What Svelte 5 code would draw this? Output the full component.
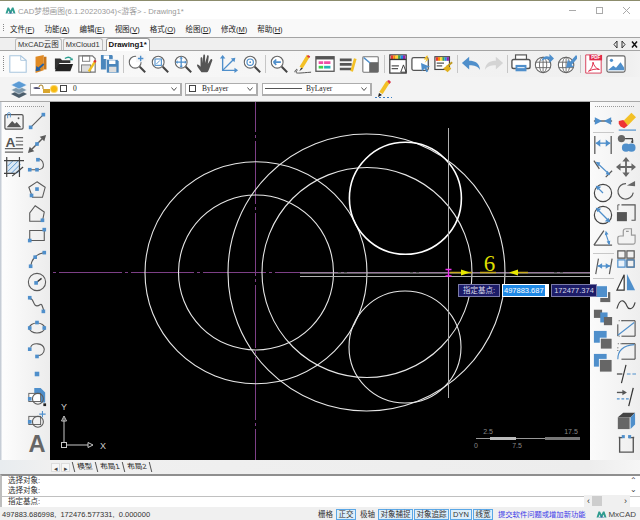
<script>
  const B = '#4f8fcb', G = '#5a5a5a', D = '#333';
  const n = (x, y, r = 2) => `<rect x="${x - r}" y="${y - r}" width="${r * 2}" height="${r * 2}" fill="${B}"/>`;
  const s = (d, c = G, w = 1.2) => `<path d="${d}" fill="none" stroke="${c}" stroke-width="${w}"/>`;
  const f = (d, c = G) => `<path d="${d}" fill="${c}"/>`;
  const mag = (x = '') => `<circle cx="9" cy="9" r="6.5" fill="#fff" stroke="#666" stroke-width="1.2"/><path d="M14 14l6 6" stroke="#444" stroke-width="2.2"/>${x}`;
  const globe = (x) => `<circle cx="10" cy="12" r="8.5" fill="#fff" stroke="#666" stroke-width="1.2"/><ellipse cx="10" cy="12" rx="4" ry="8.5" fill="none" stroke="#666"/><path d="M2 9h16M2 15h16M10 3.500v17" stroke="#666"/>${x}`;
  const stripes = ['#e53935', '#fb8c00', '#fdd835', '#43a047', '#1e88e5', '#8e24aa'];
  const rainbow = (x, y, w) => stripes.map((c, i) => `<rect x="${x + i * w}" y="${y}" width="${w}" height="4" fill="${c}"/>`).join('');

  const top = [
    [`<path d="M2 2h12l6 5v13H2z" fill="#fff" stroke="#a9c6de" stroke-width="1.2"/><path d="M14 2v5h6" fill="none" stroke="#a9c6de"/>`, `<path d="M5 3l9-2v17l-9 3z" fill="#e08a24"/><path d="M14 3h3v14h-3z" fill="#c7761c"/><path d="M14 11l-7 6" stroke="#1f5fa8" stroke-width="2"/><path d="M5 19l1-6 5 5z" fill="#1f5fa8"/>`, `<path d="M1 5h6l2 2h9v3H6l-3 7H1z" fill="#333"/><path d="M5 11h16l-3 8H1z" fill="#222"/><path d="M12 5q4-3 7 0" fill="none" stroke="#2a9d8f" stroke-width="1.5"/><path d="M21 7l-4 0 3-3z" fill="#2a9d8f"/>`, `<path d="M2 2h15l3 3v15H2z" fill="#fff" stroke="#777" stroke-width="1.3"/><rect x="6" y="2" width="8" height="6" fill="none" stroke="#777"/><rect x="5" y="12" width="10" height="8" fill="#ddd" stroke="#777"/><path d="M20 8l-7 11" stroke="#f0c020" stroke-width="2.6"/><path d="M20.500 7l-1.500 2" stroke="#d33" stroke-width="2.6"/>`, `<path d="M1 1h12l1 1v15H1z" fill="#4a86bc"/><rect x="4" y="1.500" width="6" height="4" fill="#fff"/><path d="M7 6h12l2 2v13H7z" fill="#4a86bc" stroke="#fff" stroke-width=".8"/><rect x="10" y="7" width="7" height="4" fill="#fff"/><rect x="10" y="14" width="8" height="6" fill="#ddd"/>`],
    [mag(`<rect x="10" y="0" width="11" height="9" fill="#f5f5f5"/><path d="M15 2v6M12 5h6" stroke="${B}" stroke-width="1.5"/>`), mag(`<rect x="5.500" y="5.500" width="7" height="7" fill="none" stroke="${B}" stroke-width="1.200"/><path d="M7 11l4-4" stroke="${B}"/>`), mag(`<path d="M9 4v10M4 9h10" stroke="${B}" stroke-width="1.400"/><path d="M9 3l-2 2h4zM9 15l-2-2h4zM3 9l2-2v4zM15 9l-2-2v4z" fill="${B}"/>`), f('M6 20c-2-3-5-6-5-8 1-1 2 0 4 2l0-9c0-2 2-2 2 0v5l1-8c0-2 2-2 2 0v8l2-7c0-2 2-2 2 0l-1 8 3-5c1-1 2 0 2 1l-3 8c-1 3-2 5-3 5z', '#555'), `${s('M4 3v15h15', B, 1.5)}${s('M4 18L16 6', B, 1.5)}${f(`M4 1l3 4H1zM21 18l-4-3v6zM18 4l-1 5-4-4z`, B)}`, mag(`<circle cx="9" cy="9" r="3.500" fill="none" stroke="${B}" stroke-width="1.300"/><circle cx="9" cy="9" r="1" fill="${B}"/>`)],
    [mag(`<path d="M5 9h8M5 9l3-3M5 9l3 3" stroke="${B}" stroke-width="1.800" fill="none"/>`), `<path d="M18 2l-8 13" stroke="#f3c026" stroke-width="4"/><path d="M17.500 1l2.500 1.500-1 2-2.500-1.500z" fill="#d9344a"/><path d="M8 19l2-4 2 1z" fill="#333"/><path d="M3 20c1-4 4-4 2-1s2 2 16 1" fill="none" stroke="#444"/>`, `<rect x="1" y="3" width="20" height="16" fill="#fff" stroke="#555" stroke-width="1.400"/><rect x="1" y="3" width="20" height="3" fill="#555"/><rect x="4" y="8" width="5" height="3" fill="#ef4fa6"/><rect x="10" y="8" width="7" height="3" fill="#ef4fa6"/><rect x="4" y="13" width="5" height="3" fill="#3ed14a"/><rect x="10" y="13" width="7" height="3" fill="#26b4b4"/>`, `<path d="M2 5h13v3H2zM2 10h13v3H2zM2 15h13v3H2z" fill="#555"/><path d="M15 19L19 5" stroke="#f3c026" stroke-width="3"/>`, `<rect x="2" y="3" width="17" height="17" rx="1" fill="#fff" stroke="#777" stroke-width="1.200"/><path d="M9 9h10v11H9z" fill="#666"/><path d="M3 4l7 6" stroke="${B}" stroke-width="1.500"/>`],
    [`<rect x="2" y="1" width="18" height="20" fill="#fff" stroke="#333" stroke-width="1.300"/>${rainbow(3, 1.500, 2.700)}<path d="M2 6h18" stroke="#333" stroke-width="1.500"/><path d="M4 13h8M4 16h7" stroke="#555" stroke-width="1.400"/><path d="M14 20l3-8 3 8z" fill="none" stroke="#333"/>`, `<rect x="1" y="4" width="18" height="14" rx="2" fill="#fff" stroke="#555" stroke-width="1.400"/><path d="M11 10l10 4-4 1 2 4-2 1-2-4-3 3z" fill="${B}"/><path d="M17 2l-3 4h3l-2 4 5-5h-3l2-3z" fill="#f3c026"/>`, `<rect x="1" y="3" width="16" height="14" fill="#fff" stroke="#444" stroke-width="1.300"/>${rainbow(2, 3.500, 2.400)}<path d="M3 10h8M3 13h6" stroke="#555" stroke-width="1.300"/><path d="M20 9l-6 5" stroke="#c09a20" stroke-width="2"/><path d="M15 12l4 4-4 4-5-4z" fill="#e0b020"/>`],
    [`<path d="M1 10l8-7v4.500c6 0 11 2 12 10-3-4-6-5-12-5V17z" fill="${B}"/>`, `<path d="M21 10l-8-7v4.500c-6 0-11 2-12 10 3-4 6-5 12-5V17z" fill="#d4d4d4"/>`],
    [`<rect x="5" y="1" width="12" height="6" fill="#fff" stroke="#555" stroke-width="1.300"/><rect x="1" y="6" width="20" height="10" rx="2" fill="#fff" stroke="#555" stroke-width="1.500"/><rect x="5" y="12" width="12" height="7" fill="${B}"/><path d="M7 15h8" stroke="#fff"/>`, globe(`<path d="M8 8c2-6 6-6 9-5V0l5 5-5 5V6c-3-1-6-1-9 2z" fill="${B}"/>`), globe(`<path d="M21 1l-7 8-2-3-2 9 9-1-3-2 7-8z" fill="${B}"/>`)],
    [`<path d="M3 1h12l5 3v17H3z" fill="#fff" stroke="#d9465f" stroke-width="1.100"/><rect x="7" y="1" width="14" height="6" fill="#e02a48"/><text x="14" y="6" text-anchor="middle" font-size="5" font-weight="700" fill="#fff" font-family="Liberation Sans, sans-serif">PDF</text><path d="M6 19c3-2 5-6 5-10 1 4 3 7 7 8-4-1-8 0-12 2z" fill="none" stroke="#e02a48" stroke-width="1.100"/>`, `<rect x="1" y="2" width="20" height="18" rx="2" fill="#fff" stroke="#666" stroke-width="1.300"/><path d="M2 18l6-5 3 2 5-6 4 6v3z" fill="${B}"/><circle cx="6" cy="7" r="1.800" fill="${B}"/>`]
  ];

  const leftA = [
    `<rect x="1" y="4" width="20" height="16" rx="1.500" fill="#f4f4f4" stroke="#555" stroke-width="1.300"/><path d="M3 18l6-7 3 3 2-2 5 6z" fill="#555"/><circle cx="16" cy="8" r="1" fill="#555"/><path d="M4 8V2.500q1.500-1.500 3 0V7" fill="none" stroke="${B}"/>`,
    `<text x="7" y="14" text-anchor="middle" font-size="15" font-weight="700" fill="#555" font-family="Liberation Sans, sans-serif">A</text><path d="M13 4h8M13 8h8M13 12h8M1 16h20M1 20h20" stroke="#666" stroke-width="1.300"/>`,
    `<path d="M4 4h14v14H4z" fill="#dbe8f4"/><path d="M4 10l6-6M4 16L16 4M8 18L18 8M14 18l4-4" stroke="${B}"/><path d="M3 0v22M17 0v22M0 4h22M0 18h12" stroke="#444" stroke-width="1.300"/><path d="M9 21L21 11" stroke="#444" stroke-width="1.300"/>`
  ];
  const leftB = [
    s('M4 18L18 4') + n(4, 18) + n(18, 4),
    s('M3 19L19 3', G, 1.500) + f('M1 21l2-7 5 5zM21 1l-2 7-5-5z') + n(11, 11),
    s('M3 14h8q8 0 7-6t-7-6') + n(3, 14) + n(11, 14) + n(12, 3),
    s('M11 2l9 6-3 11H6L2 8z') + n(11, 10) + n(5, 17),
    s('M9 3l10 7-2 10H3V11z') + n(17, 19),
    s('M3 5h16v11H3z') + n(3, 16) + n(19, 4),
    s('M4 19Q6 6 19 4') + n(4, 19) + n(9, 9) + n(19, 4),
    `<circle cx="11" cy="11" r="9.500" fill="none" stroke="${G}" stroke-width="1.200"/>` + s('M11 11L16 7', D, 1.500) + n(10, 12),
    s('M3 4c5-1 3 8 8 8s4-7 8 7') + n(3, 3) + n(18, 18),
    `<ellipse cx="11" cy="11" rx="8.500" ry="5.500" fill="none" stroke="${G}" stroke-width="1.200"/>` + n(3, 11) + n(19, 11) + n(11, 5),
    s('M4 7C6 1 18 2 19 9c0 5-4 7-7 7') + n(3, 9) + n(11, 17),
    n(11, 11, 2.500),
    `<path d="M8 1h7l5 5v11h-5V9H8z" fill="${B}"/><rect x="2" y="7" width="13" height="9" fill="#fff" stroke="${G}"/><circle cx="12" cy="13" r="6" fill="none" stroke="${G}" stroke-width="1.200"/>` + n(3, 13) + `<rect x="18" y="18" width="3" height="3" fill="#222"/>`,
    `<rect x="2" y="7" width="13" height="9" fill="none" stroke="${G}"/><circle cx="12" cy="13" r="6" fill="none" stroke="${G}" stroke-width="1.200"/>` + n(3, 13) + `<path d="M17 1v7M13.500 4.500h7" stroke="${B}" stroke-width="1.200"/>`,
    `<text x="11" y="20.500" text-anchor="middle" font-size="26" font-weight="700" fill="#666" font-family="Liberation Sans, sans-serif">A</text>`
  ];
  const rightA = [
    { h: 23, i: s('M1 11h20', D) + f(`M10 11L2 7v8zM12 11l8-4v8z`, B) },
    { h: 2, sep: 1 },
    { h: 21, i: s('M2 1v20M20 1v20', G, 1.400) + s('M3 9h16', B, 1.500) + f(`M3 9l5-4v8zM19 9l-5-4v8z`, B) },
    { h: 26, i: s('M1 3l6 9M14 21l7-7', G, 1.400) + s('M4 5l14 13', B, 1.400) + f(`M3 4l5 1-2 4zM19 19l-5-1 2-4z`, B) },
    { h: 23, i: `<circle cx="11" cy="11" r="9.500" fill="none" stroke="#444" stroke-width="1.300"/>` + s('M4 4l7 7', B, 1.400) + f(`M3 3l6 1-4 4z`, B) },
    { h: 22, i: `<circle cx="11" cy="11" r="9.500" fill="none" stroke="#444" stroke-width="1.300"/>` + s('M5 5l12 12', B, 1.400) + f(`M3 3l6 1-4 4zM19 19l-6-1 4-4z`, B) },
    { h: 22, i: s('M1 20h20M1 20L12 4', G, 1.400) + s('M14 7l4 12', B) + f(`M14 4l3 4-4 1zM18 20l1-5-4 1z`, B) },
    { h: 7, sep: 1 },
    { h: 21, i: s('M3 20L6 3M18 20l3-17', G, 1.300) + s('M5 11h14', B, 1.500) + f(`M5 11l5-3v6zM19 11l-5-3v6z`, B) },
    { h: 4, sep: 1 },
    { h: 26, i: `<rect x="8" y="10" width="11" height="11" fill="#666"/><rect x="3" y="3" width="13" height="13" fill="${B}" stroke="#fff"/>` },
    { h: 22, i: `<rect x="1" y="3" width="9" height="9" fill="#666"/><rect x="8" y="6" width="8" height="11" fill="${B}"/><rect x="12" y="11" width="9" height="9" fill="#666"/>` },
    { h: 23, i: `<rect x="1" y="1" width="14" height="13" fill="${B}"/><rect x="8" y="9" width="13" height="12" fill="#666" stroke="#fff"/>` },
    { h: 23, i: `<rect x="1" y="1" width="14" height="14" fill="${B}"/><rect x="7" y="7" width="14" height="14" fill="#666" stroke="#fff"/>` }
  ];
  const rightB = [
    `<path d="M8 11L17 2l5 5-9 9z" fill="#f3c026"/><path d="M3 11l5-1 5 6-4 3-4-2-2-3z" fill="#e33"/><path d="M3 21h19" stroke="${B}" stroke-width="1.300"/>`,
    `<circle cx="6" cy="5" r="4" fill="#666"/><path d="M10 5h8v5" fill="none" stroke="#444" stroke-width="1.300"/><path d="M16 9l3-3v4z" fill="#444"/><circle cx="11" cy="15" r="4.500" fill="${B}"/><circle cx="17" cy="15" r="4.500" fill="${B}"/>`,
    s('M11 3v16M3 11h16', '#666', 2) + f('M11 0l4 5H7zM11 22l4-5H7zM0 11l5-4v8zM22 11l-5-4v8z', '#666'),
    s('M19 14a8.500 8.500 0 1 1-8-10', G, 1.300) + f('M12 6l9-5v6z', '#666'),
    `<path d="M6 2h15v17h-4" fill="none" stroke="#555" stroke-width="1.300"/><path d="M2 2h2M2 2v6" stroke="#555"/><rect x="1" y="10" width="11" height="10" fill="#555"/>`,
    `<path d="M5 11h3V6q0-3 3-3h6v7h4v8q0 2-2 2H4q-2 0-2-2v-5q0-2 3-2zM11 6h3" fill="#f2f2f2" stroke="#999" stroke-width="1.300"/>`,
    `<path d="M2 2h8v8H2zM12 2h8v8h-8zM12 12h8v8h-8z" fill="none" stroke="#555" stroke-width="1.300"/><path d="M2 12h8v8H2z" fill="#eaf2fa" stroke="${B}" stroke-width="1.300"/><path d="M12 12h8v8h-8z" fill="none" stroke="${B}" stroke-width="1.100"/>`,
    `<path d="M1 20L9 3v17z" fill="#fff" stroke="#333" stroke-width="1.300"/><path d="M12 2l9 18h-9z" fill="${B}"/>`,
    s('M1 15C5 1 10 7 12 12s7 4 9-4', '#444', 1.300),
    `<path d="M2 20V7M6 3h15v17H6" fill="none" stroke="#444" stroke-width="1.100"/><path d="M3 3h4M3 20h3" stroke="#444" stroke-dasharray="1 2"/><path d="M2 19L20 5" stroke="${B}" stroke-width="1.200"/>`,
    `<path d="M6 3h15v17H6" fill="none" stroke="#444" stroke-width="1.100"/><path d="M2 20C2 10 8 5 20 4" fill="none" stroke="${B}" stroke-width="1.200"/><path d="M2 3h4M2 7v6" stroke="#444" stroke-dasharray="1 2"/>`,
    s('M1 11h6', '#555', 1.500) + s('M11 1L6 21', '#333', 1.300) + s('M12 11h4M18 11h4', B, 1.300),
    s('M1 6h8', '#555', 1.500) + f('M12 6L7 3v6z', '#555') + s('M1 13h3M6 13h3M11 13h3', B, 1.300) + s('M19 1L14 21', '#333', 1.400),
    `<path d="M2 8l6-5h13l-5 5z" fill="#444"/><rect x="2" y="8" width="13" height="13" fill="#666"/><path d="M16 8l5-5v13l-5 5z" fill="${B}"/>`,
    s('M3 5h1v16h15V5h1', '#555', 1.500) + s('M7 5h-3M14 5h5', '#555', 1.300) + n(8, 4, 1.700) + n(15, 4, 1.700)
  ];
  const menus = [['文件', 'F'], ['功能', 'A'], ['编辑', 'E'], ['视图', 'V'], ['格式', 'O'], ['绘图', 'D'], ['修改', 'M'], ['帮助', 'H']];
  const logo = `<path d="M1 14L5 2h3l3 6 3-6h3l4 12h-4l-2-6-3 6h-2L7 8l-2 6z" fill="#2f9c8f"/><path d="M5 14l6-3 6 3z" fill="#2f6f9c"/>`;
</script>

<div class="win">
  <header class="title">
    <svg class="tlogo" viewBox="0 0 22 16"><g>{@html logo}</g></svg>
    <span class="ttext">CAD梦想画图(6.1.20220304)&lt;游客&gt; - Drawing1*</span>
    <div class="wc">
      <svg width="9" height="9" viewBox="0 0 9 9"><path d="M1 4.500h7" stroke="#aaa"/></svg>
      <svg width="9" height="9" viewBox="0 0 9 9"><rect x="1.500" y="1.500" width="6" height="6" fill="none" stroke="#aaa"/></svg>
      <svg width="9" height="9" viewBox="0 0 9 9"><path d="M1 1l7 7M8 1l-7 7" stroke="#aaa"/></svg>
    </div>
  </header>

  <nav class="menu">
    <i class="vgrip"></i>
    {#each menus as m}
      <span>{m[0]}(<u>{m[1]}</u>)</span>
    {/each}
  </nav>

  <div class="tabs">
    <span class="tab t-a">MxCAD云图</span>
    <span class="tab t-b">MxCloud1</span>
    <span class="tab on">Drawing1*</span>
    <div class="tabctl">
      <svg width="26" height="9" viewBox="0 0 26 9"><path d="M4 1L1 4.500 4 8zM9 1l3 3.500L9 8z" fill="none" stroke="#333"/><path d="M19 1.500l5 6M24 1.500l-5 6" stroke="#111" stroke-width="1.500"/></svg>
    </div>
  </div>

  <div class="bar1">
    <i class="vgrip big"></i>
    {#each top as group, gi}
      {#if gi}<i class="sep" class:wide={gi === 4}></i>{/if}
      {#each group as ic}
        <svg class="tb" viewBox="0 0 22 22">{@html ic}</svg>
      {/each}
    {/each}
  </div>

  <div class="bar2">
    <svg class="layers" viewBox="0 0 18 18">
      <path d="M9 10l8 4-8 4-8-4z" fill="#4b5d6b"/><path d="M9 6l8 4-8 4-8-4z" fill="#7d97aa" stroke="#fff" stroke-width=".5"/><path d="M9 1l8 4-8 4-8-4z" fill="#5b9bd5" stroke="#fff" stroke-width=".5"/>
    </svg>
    <div class="combo c1">
      <svg width="19" height="10" viewBox="0 0 19 10"><path d="M1 4q3-2 7 0v1H3z" fill="#557"/><path d="M11 9V5h7v4z" fill="#d9a62e"/><path d="M11 5V3q0-2-2-2T7 3" fill="none" stroke="#a67c1a"/></svg>
      <i class="sun"></i><i class="chk"></i><span class="cname">0</span>
      <svg class="chev" width="6" height="4" viewBox="0 0 6 4"><path d="M.5.500L3 3.500 5.500.500" fill="none" stroke="#555"/></svg>
    </div>
    <div class="combo c2">
      <i class="chk"></i><span class="bl">ByLayer</span>
      <svg class="chev" width="6" height="4" viewBox="0 0 6 4"><path d="M.5.500L3 3.500 5.500.500" fill="none" stroke="#555"/></svg>
    </div>
    <div class="combo c3">
      <i class="ln"></i><span class="bl">ByLayer</span>
      <svg class="chev" width="6" height="4" viewBox="0 0 6 4"><path d="M.5.500L3 3.500 5.500.500" fill="none" stroke="#555"/></svg>
    </div>
    <svg class="pen" viewBox="0 0 20 20"><path d="M14 3L7 14" stroke="#f3c026" stroke-width="4"/><path d="M13 2l2-1 2 2-1.500 2z" fill="#d9344a"/><path d="M4 18l1-4 3 2z" fill="#222"/><path d="M1 18.500h17" stroke="#3b7fc4" stroke-dasharray="2 2"/></svg>
  </div>

  <main class="main">
    <aside class="lbar">
      <i class="hgrip"></i>
      <div class="cols">
        <div class="col">
          {#each leftA as ic}<svg class="tb2" viewBox="0 0 22 22">{@html ic}</svg>{/each}
        </div>
        <div class="col">
          {#each leftB as ic}<svg class="tb2" viewBox="0 0 22 22">{@html ic}</svg>{/each}
        </div>
      </div>
    </aside>

    <section class="cv">
      <svg class="draw" width="540" height="358" viewBox="50 101 540 358">
        <path d="M53 271.500H590" stroke="#7d3f86" stroke-dasharray="3 3 63 3"/>
        <path d="M255.500 101V459" stroke="#7d3f86" stroke-dasharray="63 3 3 3" stroke-dashoffset="33"/>
        <g fill="none" stroke="#e6e6e6" stroke-width="1.100">
          <circle cx="256" cy="271.700" r="111"/>
          <circle cx="256" cy="271.500" r="77.500"/>
          <circle cx="366.500" cy="271.500" r="138.500"/>
          <circle cx="367" cy="271.500" r="105"/>
          <circle cx="405.400" cy="197.300" r="56" stroke="#fff" stroke-width="1.600"/>
          <circle cx="405" cy="346" r="56"/>
        </g>
        <path d="M300 272H590M300 275.500H590" stroke="#b0b0b0"/>
        <path d="M448.500 127V397" stroke="#b0b0b0"/>
        <path d="M450 271.500H472M480 271.500H496M518 271.500H528" stroke="#c8a820" stroke-width="1.300"/>
        <path d="M470 271.500L461 268.500V274.500zM509 271.500L518 268.500V274.500z" fill="#e8e800"/>
        <text x="489.500" y="270" text-anchor="middle" class="six">6</text>
        <path d="M445.500 268.500h6M445.500 275h6M448.500 268.500v6.500" stroke="#f030f0" stroke-width="1.300" fill="none"/>
        <g fill="none" stroke="#c8c8c8">
          <rect x="61.500" y="441.500" width="5" height="5"/>
          <path d="M66.500 444H88M64 441V417"/>
          <path d="M88 441.500l5 2.500-5 2.500zM61.500 420l2.500-5 2.500 5z"/>
        </g>
        <text x="103" y="448" class="ax" text-anchor="middle">X</text>
        <text x="64" y="409" class="ax" text-anchor="middle">Y</text>
        <path d="M476 437.500H580" stroke="#999"/>
        <rect x="490" y="436" width="26" height="3" fill="#bbb"/>
        <rect x="545" y="436" width="35" height="3" fill="#777"/>
        <text x="488" y="433" class="sc" text-anchor="middle">2.5</text>
        <text x="571" y="433" class="sc" text-anchor="middle">17.5</text>
        <text x="476" y="447" class="sc" text-anchor="middle">0</text>
        <text x="517" y="447" class="sc" text-anchor="middle">7.5</text>
      </svg>
    </section>

    <aside class="rbar">
      <i class="hgrip"></i>
      <div class="cols">
        <div class="col ra">
          {#each rightA as r}
            {#if r.sep}
              <i class="hsep" style="height:{r.h}px"></i>
            {:else}
              <div class="cell" style="height:{r.h}px"><svg class="tb2" viewBox="0 0 22 22">{@html r.i}</svg></div>
            {/if}
          {/each}
        </div>
        <div class="col">
          {#each rightB as ic}<svg class="tb2" viewBox="0 0 22 22">{@html ic}</svg>{/each}
        </div>
      </div>
    </aside>

    <div class="tip t1">指定基点:</div>
    <div class="tip t2"><b>497883.687</b></div>
    <div class="tip t3">172477.374</div>
  </main>

  <div class="lay">
    <span class="arr">◂</span><span class="arr">▸</span>
    <span class="lt first">模型</span><span class="lt">布局1</span><span class="lt">布局2</span>
  </div>

  <div class="cmd">
    <div class="hist">
      <p>选择对象:</p>
      <p>选择对象:</p>
    </div>
    <div class="now"><p>指定基点:</p></div>
    <div class="vs"><span>⌃</span><span>⌄</span></div>
    <div class="hs"><span>‹</span><i></i><span>›</span></div>
  </div>

  <footer class="status">
    <span class="coord">497883.686998,&nbsp; 172476.577331,&nbsp; 0.000000</span>
    <span class="st pl">栅格</span>
    <span class="st a w20">正交</span>
    <span class="st pl">极轴</span>
    <span class="st a w36">对象捕捉</span>
    <span class="st a w36">对象追踪</span>
    <span class="st a w22">DYN</span>
    <span class="st a w20">线宽</span>
    <span class="link">提交软件问题或增加新功能</span>
    <span class="mx"><svg width="11" height="9" viewBox="0 0 22 16"><g>{@html logo}</g></svg>MxCAD</span>
  </footer>
</div>

<style>
  :global(body) { margin: 0; background: #fff; }
  .win { width: 640px; height: 520px; overflow: hidden; display: flex; flex-direction: column; background: #f2f2f2; font-family: "Liberation Sans", "Noto Sans CJK SC", sans-serif; font-size: 7.5px; color: #222; box-sizing: border-box; border-top: 1px solid #8c8c6c; }
  p { margin: 0; }
  i { display: block; }
  .title { height: 18px; background: #fff; display: flex; align-items: center; padding-left: 5px; flex: none; }
  .tlogo { width: 11px; height: 9px; margin-right: 2px; }
  .ttext { color: #9a9a9a; font-size: 7.700px; }
  .wc { margin-left: auto; display: flex; gap: 18px; padding-right: 9px; }
  .menu { height: 18px; background: #f9f9f9; display: flex; align-items: center; gap: 10px; flex: none; padding-left: 3px; }
  .menu span { color: #222; font-size: 7.500px; }
  .vgrip { width: 1px; height: 8px; margin-right: -4px; background-image: linear-gradient(#888 50%, transparent 50%); background-size: 1px 2px; }
  .vgrip.big { height: 16px; margin: 0 2px 0 3px; }
  .tabs { height: 14px; background: #efefef; border-top: 1px solid #a4a4a4; border-bottom: 1px solid #a4a4a4; display: flex; align-items: flex-end; padding-left: 15px; flex: none; box-sizing: border-box; }
  .tab { height: 11px; line-height: 11px; padding: 0 2px; border: 1px solid #bbb; border-bottom: 0; border-radius: 3px 3px 0 0; font-size: 7.500px; color: #333; background: #f2f2f2; }
  .t-a { margin-right: 1px; }
  .t-b { margin-right: 3px; }
  .tab.on { background: #fff; font-weight: 700; color: #111; font-size: 7.800px; position: relative; top: 1px; height: 12px; border-color: #999; }
  .tabctl { margin-left: auto; padding: 0 1px 1px 0; display: flex; }
  .bar1 { height: 26px; display: flex; align-items: center; background: linear-gradient(to right, #fafafa, #efefef 98%, #f2f2f2); flex: none; }
  .tb { width: 20px; height: 20px; margin: 0 1.600px; flex: none; }
  .sep { width: 1px; height: 18px; background: #c6c6c6; margin: 0 1px; flex: none; }
  .sep.wide { margin: 0 1.500px; }
  .bar2 { height: 24px; display: flex; align-items: center; background: #f3f3f3; flex: none; padding-left: 10px; }
  .layers { width: 18px; height: 18px; margin-right: 2px; flex: none; }
  .combo { height: 13px; box-sizing: border-box; background: #fff; border: 1px solid #adadad; border-bottom-width: 2px; border-right-width: 2px; display: flex; align-items: center; position: relative; flex: none; }
  .c1 { width: 152px; padding-left: 1px; margin-right: 3px; }
  .c2 { width: 73px; padding-left: 3px; margin-right: 4px; }
  .c3 { width: 110px; padding-left: 1px; margin-right: 2px; }
  .chev { position: absolute; right: 3px; top: 3px; }
  .chk { width: 5px; height: 5px; border: 1px solid #444; flex: none; }
  .sun { width: 6px; height: 6px; border-radius: 50%; background: #f6b90f; box-shadow: 0 0 0 1px #fbd66a; margin: 0 3px 0 0; flex: none; }
  .cname { font-family: "Liberation Serif", serif; margin-left: 6px; font-size: 7.500px; }
  .bl { font-family: "Liberation Serif", serif; font-size: 7.500px; margin-left: 6px; }
  .ln { width: 37px; height: 1px; background: #555; flex: none; margin-left: 1px; margin-right: -2px; }
  .pen { width: 20px; height: 20px; flex: none; }
  .main { height: 359px; display: flex; position: relative; flex: none; border-top: 1px solid #a8a8a8; box-sizing: border-box; }
  .lbar { width: 50px; background: linear-gradient(to right, #c6cdd6 0, #c6cdd6 1px, #fdfdfd 2px, #ececec 100%); flex: none; }
  .rbar { width: 50px; background: linear-gradient(to right, #fbfbfb, #eeeeee); flex: none; }
  .hgrip { height: 1px; margin: 4px 5px 2px; background-image: linear-gradient(to right, #999 50%, transparent 50%); background-size: 2px 1px; }
  .cols { display: flex; padding-left: 2.500px; }
  .rbar .cols { padding-left: 1.500px; }
  .col { width: 23px; display: flex; flex-direction: column; }
  .tb2 { width: 20px; height: 20px; margin: 1.500px; flex: none; display: block; overflow: visible; }
  .cell { display: flex; align-items: center; }
  .hsep { position: relative; flex: none; }
  .hsep::after { content: ""; position: absolute; left: 1px; right: 1px; bottom: 1px; height: 1px; background: #c8c8c8; }
  .cv { flex: 1; background: #000; overflow: hidden; }
  .draw { display: block; }
  .six { font-family: "Liberation Serif", serif; font-size: 23px; fill: #dede00; }
  .ax { font-family: "Liberation Sans", sans-serif; font-size: 9px; fill: #ccc; }
  .sc { font-family: "Liberation Sans", sans-serif; font-size: 7px; fill: #888; }
  .tip { position: absolute; top: 182px; height: 13px; box-sizing: border-box; background: #1c1c68; border: 1px solid #7b7ba8; color: #d8d8e8; font-size: 7.500px; line-height: 11px; text-align: center; }
  .t1 { left: 458px; width: 42px; }
  .t2 { left: 502px; width: 47px; background: #fff; border: 1px solid #fff; text-align: left; }
  .t2 b { display: block; width: 41px; height: 11px; background: #1e88e5; color: #fff; font-weight: 400; padding-left: 1px; }
  .t3 { left: 551px; width: 46px; }
  .lay { height: 14px; display: flex; align-items: center; padding-left: 50px; background: linear-gradient(to right, #e8ecef, #f0f0f0 8%, #ededed 92%, #f6f6f6); flex: none; box-sizing: border-box; }
  .arr { width: 9px; height: 9px; border: 1px solid #ddd; background: #f7f7f7; color: #444; font-size: 7px; line-height: 9px; text-align: center; margin-left: 1px; box-sizing: border-box; }
  .lt { padding: 0 3.500px; border-right: 1px solid #555; height: 10px; line-height: 10px; transform: skewX(14deg); font-size: 7.500px; }
  .first { border-left: 1px solid #555; margin-left: 3px; }
  .cmd { height: 33px; position: relative; background: #fff; border-top: 2px solid #8f8f8f; box-sizing: border-box; border-left: 2px solid #bdbdbd; flex: none; font-size: 7.500px; color: #333; padding-left: 5px; }
  .hist { height: 20px; border-bottom: 1px solid #c0c0c0; margin-left: -5px; padding: 0 0 0 6px; }
  .hist p { height: 10px; line-height: 10px; }
  .now { padding-left: 1px; height: 10px; line-height: 10px; }
  .vs { position: absolute; right: 2px; top: 0; width: 10px; display: flex; flex-direction: column; font-size: 8px; line-height: 9px; text-align: center; color: #444; }
  .hs { position: absolute; right: 10px; bottom: 0; height: 12px; width: 46px; display: flex; align-items: center; justify-content: space-between; background: #f0f0f0; padding: 0 3px; box-sizing: border-box; color: #333; font-size: 9px; }
  .hs i { width: 10px; height: 10px; background: #cdcdcd; margin: 0 auto 0 2px; }
  .status { height: 15px; background: #f0f0f0; display: flex; align-items: center; flex: none; font-size: 7.500px; padding: 0 4px 1px 2px; box-sizing: border-box; }
  .coord { color: #333; width: 313px; flex: none; white-space: nowrap; }
  .st { height: 11px; line-height: 9px; box-sizing: border-box; padding: 0 1px; text-align: center; color: #333; border: 1px solid transparent; }
  .st.a { border: 1px solid #5aa7e6; background: #dceefb; margin-right: 1px; }
  .pl { margin: 0 1px; width: 19px; }
  .w20 { width: 20px; }
  .w22 { width: 22px; }
  .w36 { width: 35px; }
  .link { color: #3a3ae8; margin-left: 4px; white-space: nowrap; font-size: 7.300px; }
  .mx { margin-left: auto; display: flex; align-items: center; gap: 1px; color: #444; font-size: 8px; }
</style>
